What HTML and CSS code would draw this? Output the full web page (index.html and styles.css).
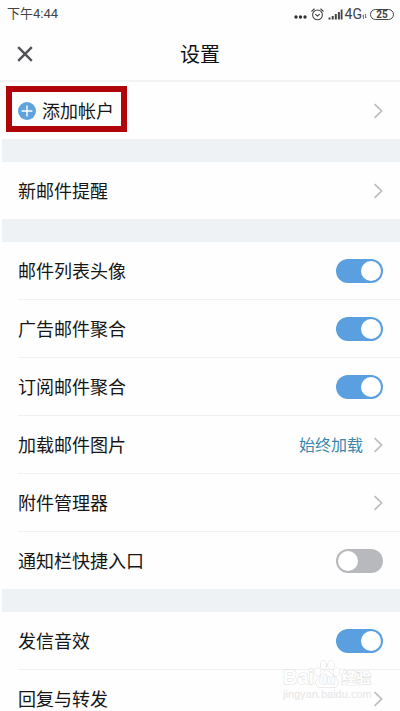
FILE: index.html
```html
<!DOCTYPE html>
<html lang="zh-CN">
<head>
<meta charset="utf-8">
<meta name="viewport" content="width=device-width, initial-scale=1">
<title>设置</title>
<link rel="stylesheet" href="styles.css">
</head>
<body>
<svg class="defs" aria-hidden="true">
  <symbol id="chevron" viewBox="0 0 10 16"><path d="M1.6 1.2 8.6 8 1.6 14.8" fill="none" stroke="#bcbdc0" stroke-width="1.7"/></symbol>
</svg>
<div class="screen">
  <div class="status">
    <span class="time">下午4:44</span>
    <div class="indicators">
      <svg class="dots" viewBox="0 0 13 4" width="13" height="4"><g fill="#333"><circle cx="2" cy="2" r="1.7"/><circle cx="6.5" cy="2" r="1.7"/><circle cx="11" cy="2" r="1.7"/></g></svg>
      <svg class="alarm" viewBox="0 0 12 12" width="13" height="13"><g fill="none" stroke="#444" stroke-width="1" stroke-linecap="round"><circle cx="6" cy="6.4" r="4.5"/><path d="M.7 3 3 .9M11.3 3 9 .9M4.200 5.800 6 7.400 7.800 5.800"/></g></svg>
      <svg class="signal" viewBox="0 0 15 11" width="15" height="11"><g fill="#444"><path d="M.5 8.500h2V10.500h-2zM3.700 7h2v3.500h-2zM6.800 5h2v5.500h-2zM9.900 3h2v7.500H9.900zM12.700 .5h1.800v10h-1.800z"/></g></svg>
      <span class="net">4G</span>
      <svg class="updown" viewBox="0 0 5 5" width="5" height="5"><path d="M1.500 5V1L.3 2.200M3.500 0v4L4.700 2.800" fill="none" stroke="#555" stroke-width=".8"/></svg>
      <span class="battery">25</span>
    </div>
  </div>
  <header class="header">
    <button class="close" type="button" aria-label="关闭"><svg viewBox="0 0 16 16" width="16" height="16"><path d="M1.200 1.200 14.800 14.800M14.800 1.200 1.200 14.800" stroke="#505255" stroke-width="2.400"/></svg></button>
    <h1>设置</h1>
  </header>
  <main>
    <section class="group">
      <button class="row add" type="button">
        <svg class="plus" viewBox="0 0 18 18" width="18" height="18"><circle cx="9" cy="9" r="9" fill="#5fa2dc"/><path d="M9 3.600v10.800M3.600 9h10.800" stroke="#fff" stroke-width="1.400"/></svg>
        <span class="label">添加帐户</span>
        <svg class="chevron"><use href="#chevron"/></svg>
      </button>
    </section>
    <section class="group">
      <button class="row" type="button"><span class="label">新邮件提醒</span><svg class="chevron"><use href="#chevron"/></svg></button>
    </section>
    <section class="group">
      <label class="row"><span class="label">邮件列表头像</span><input class="switch" type="checkbox" checked></label>
      <label class="row"><span class="label">广告邮件聚合</span><input class="switch" type="checkbox" checked></label>
      <label class="row"><span class="label">订阅邮件聚合</span><input class="switch" type="checkbox" checked></label>
      <button class="row" type="button"><span class="label">加载邮件图片</span><span class="value">始终加载</span><svg class="chevron"><use href="#chevron"/></svg></button>
      <button class="row" type="button"><span class="label">附件管理器</span><svg class="chevron"><use href="#chevron"/></svg></button>
      <label class="row"><span class="label">通知栏快捷入口</span><input class="switch" type="checkbox"></label>
    </section>
    <section class="group">
      <label class="row"><span class="label">发信音效</span><input class="switch" type="checkbox" checked></label>
      <button class="row" type="button"><span class="label">回复与转发</span><svg class="chevron"><use href="#chevron"/></svg></button>
    </section>
  </main>
  <div class="watermark">
    <div class="brand"><span>Bai</span><span class="paw"><svg viewBox="0 0 26 28" width="26" height="28"><g fill="#fff" stroke="#d9d9d9" stroke-width="1"><ellipse cx="3.800" cy="12" rx="3" ry="4"/><ellipse cx="9.500" cy="5" rx="3" ry="4.200"/><ellipse cx="17" cy="5" rx="3" ry="4.200"/><ellipse cx="22.300" cy="12" rx="3" ry="4"/><path d="M13 11c3 0 4.500 2.500 6.500 5 2 2.300 5 4 4.500 7.500-.5 3-3 4-5.500 3.800-4-.5-7-.5-11 0C5 27.500 2.500 26.500 2 23.500c-.5-3.500 2.500-5.200 4.500-7.500C8.500 13.500 10 11 13 11z"/></g></svg><b>du</b></span><span class="cn">经验</span></div>
    <div class="site">jingyan.baidu.com</div>
  </div>
</div>
</body>
</html>
```

FILE: styles.css
```css
*, *::before { box-sizing: border-box; }

html, body { margin: 0; background: #fefefe; }

body {
  font-family: "Noto Sans CJK SC", sans-serif;
  color: #161616;
}

.defs { position: absolute; width: 0; height: 0; }

.screen {
  position: relative;
  height: 100vh;
  overflow: hidden;
}

button {
  font: inherit;
  color: inherit;
  background: none;
  border: 0;
  padding: 0;
}

.status {
  display: flex;
  align-items: center;
  justify-content: space-between;
  height: 28px;
  padding: 0 6px 0 7px;
  line-height: 28px;
  color: #444;
}

.time, .net { font-family: Roboto, "Noto Sans CJK SC", sans-serif; }
.time { font-size: 13px; }
.net { margin-left: 2px; font-size: 14px; }
.indicators { display: flex; align-items: center; }
.dots { align-self: flex-end; margin: 0 4px 9px 0; }
.signal { margin-left: 4px; }
.updown { margin: 5px 3px 0 0; }

.battery {
  width: 24px;
  height: 11px;
  border: 1px solid #444;
  border-radius: 6px;
  font: bold 10px/9px Roboto, sans-serif;
  text-align: center;
}

.header {
  position: relative;
  display: flex;
  align-items: center;
  justify-content: center;
  height: 54px;
  border-bottom: 2px solid #f3f3f4;
}

.header h1 {
  margin: 0;
  font-size: 20px;
  line-height: 30px;
  font-weight: 400;
  color: #111;
}

.close {
  position: absolute;
  left: 17px;
  top: 18px;
  display: flex;
}

.group { padding-left: 18px; }

.group + .group {
  border-top: 23px solid #eff2f5;
  margin-left: 2px;
  padding-left: 16px;
}

.row {
  display: flex;
  align-items: center;
  width: 100%;
  height: 57px;
  padding-right: 17px;
  text-align: left;
}

.row + .row {
  height: 58px;
  border-top: 1px solid #f1f1f2;
}

.label {
  flex: 1;
  padding-bottom: 1px;
  font-size: 18px;
  line-height: 26px;
}

.value {
  margin-right: 10px;
  padding-bottom: 1px;
  font-size: 16px;
  line-height: 24px;
  color: #3c86aa;
}

.chevron { width: 10px; height: 16px; }

.add { position: relative; }

.add::before {
  content: "";
  position: absolute;
  left: -12px;
  top: 4px;
  width: 121px;
  height: 46px;
  border: 6px solid #b00509;
}

.plus { margin-right: 6px; }

.switch {
  appearance: none;
  display: flex;
  align-items: center;
  width: 47px;
  height: 24px;
  margin: 0;
  padding: 2px;
  border-radius: 12px;
  background: #b7b9bc;
}

.switch::before {
  content: "";
  width: 20px;
  height: 20px;
  border-radius: 50%;
  background: #fff;
}

.switch:checked {
  justify-content: flex-end;
  background: #5a9fe0;
}

.watermark {
  position: absolute;
  right: 20px;
  bottom: 11px;
  width: 97px;
  color: #fff;
  font-family: "Liberation Sans", sans-serif;
  pointer-events: none;
}

.brand {
  display: flex;
  align-items: flex-end;
  font-size: 20px;
  line-height: 22px;
  font-weight: 700;
  white-space: nowrap;
  -webkit-text-stroke: 1px #dedede;
  paint-order: stroke fill;
}

.paw { position: relative; display: flex; }

.paw b {
  position: absolute;
  left: 5px;
  bottom: 1px;
  font-size: 13px;
  line-height: 14px;
}

.cn {
  font-family: "Noto Sans CJK SC", sans-serif;
  font-size: 15px;
  margin-left: 1px;
}

.site {
  font-size: 11px;
  line-height: 12px;
  white-space: nowrap;
  color: #e6e6e6;
}
```
